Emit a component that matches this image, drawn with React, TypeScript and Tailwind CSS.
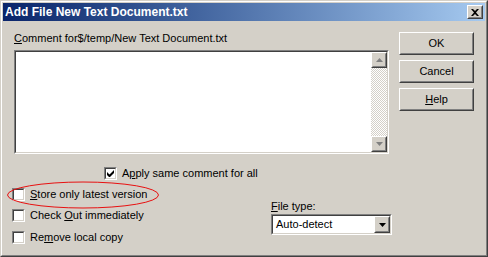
import React from 'react';

const raised =
  'border border-t-white border-l-white border-r-[#404040] border-b-[#404040]';
const raisedInner =
  'border border-t-[#D4D0C8] border-l-[#D4D0C8] border-r-[#808080] border-b-[#808080]';
const sunken =
  'border border-t-[#808080] border-l-[#808080] border-r-white border-b-white';
const sunkenInner =
  'border border-t-[#404040] border-l-[#404040] border-r-[#D4D0C8] border-b-[#D4D0C8]';

function Button({ children }: { children: React.ReactNode }) {
  return (
    <div className={`w-[75px] h-[23px] ${raised}`}>
      <div className={`w-full h-full flex items-center justify-center ${raisedInner}`}>
        {children}
      </div>
    </div>
  );
}

function Checkbox({ checked }: { checked?: boolean }) {
  return (
    <div className={`w-[13px] h-[13px] shrink-0 ${sunken}`}>
      <div className={`w-full h-full bg-white flex items-center justify-center ${sunkenInner}`}>
        {checked && (
          <svg width="7" height="7" viewBox="0 0 7 7">
            <path d="M0 2v3l2 2h1l4-4V0L2.5 4.5z" fill="#000" />
          </svg>
        )}
      </div>
    </div>
  );
}

function ArrowBtn({ down }: { down?: boolean }) {
  return (
    <div className={`w-[16px] h-[16px] ${raised}`}>
      <div className={`w-full h-full bg-[#D4D0C8] flex items-center justify-center ${raisedInner}`}>
        <svg width="9" height="5" viewBox="0 0 9 5">
          {down ? (
            <path d="M1 0h7L4.5 4z" fill="#808080" />
          ) : (
            <path d="M4.5 0L8 4H1z" fill="#808080" />
          )}
        </svg>
      </div>
    </div>
  );
}

export default function App() {
  return (
    <div
      className="w-[488px] h-[257px] bg-[#D4D0C8] text-black text-[11px] leading-[13px] border border-t-[#D4D0C8] border-l-[#D4D0C8] border-r-[#404040] border-b-[#404040]"
      style={{ fontFamily: '"Liberation Sans", Arial, sans-serif' }}
    >
      <div className="w-full h-full p-px border border-t-white border-l-white border-r-[#808080] border-b-[#808080] flex flex-col">
        {/* title bar */}
        <div className="h-[18px] shrink-0 bg-gradient-to-r from-[#0A246A] to-[#A6CAF0] flex items-center pl-[2px] pr-[2px]">
          <span className="text-white font-bold text-[12px] flex-1">Add File New Text Document.txt</span>
          <div className={`w-[16px] h-[14px] ${raised}`}>
            <div className={`w-full h-full bg-[#D4D0C8] flex items-center justify-center ${raisedInner}`}>
              <svg width="8" height="7" viewBox="0 0 8 7">
                <path d="M0 0h2l2 2 2-2h2L5 3.5 8 7H6L4 5 2 7H0l3-3.5z" fill="#000" />
              </svg>
            </div>
          </div>
        </div>

        <div className="relative flex flex-1">
          {/* left column */}
          <div className="pl-[11px] flex flex-col">
            <div className="mt-[11px] h-[13px]">
              <span className="underline">C</span>omment for$/temp/New Text Document.txt
            </div>
            <div className={`mt-[5px] w-[375px] h-[104px] ${sunken}`}>
              <div className={`w-full h-full bg-white flex justify-end ${sunkenInner}`}>
                <div className="w-[16px] h-full flex flex-col bg-[repeating-conic-gradient(#D4D0C8_0%_25%,#fff_0%_50%)] bg-[length:2px_2px]">
                  <ArrowBtn />
                  <div className="flex-1" />
                  <ArrowBtn down />
                </div>
              </div>
            </div>
            <div className="mt-[13px] ml-[90px] flex items-center gap-[5px] h-[13px]">
              <Checkbox checked />
              <span>
                A<span className="underline">p</span>ply same comment for all
              </span>
            </div>
            <div className="flex">
              <div className="-ml-[2px] flex flex-col">
                <div className="mt-[8px] flex items-center gap-[5px] h-[13px]">
                  <Checkbox />
                  <span>
                    <span className="underline">S</span>tore only latest version
                  </span>
                </div>
                <div className="mt-[8px] flex items-center gap-[5px] h-[13px]">
                  <Checkbox />
                  <span>
                    Check <span className="underline">O</span>ut immediately
                  </span>
                </div>
                <div className="mt-[9px] flex items-center gap-[5px] h-[13px]">
                  <Checkbox />
                  <span>
                    Re<span className="underline">m</span>ove local copy
                  </span>
                </div>
              </div>
              <div className="ml-auto mr-[-3px] flex flex-col">
                <div className="mt-[20px] h-[13px]">
                  <span className="underline">F</span>ile type:
                </div>
                <div className={`mt-px w-[121px] h-[21px] ${sunken}`}>
                  <div className={`w-full h-full bg-white flex items-center ${sunkenInner}`}>
                    <span className="flex-1 pl-[3px] text-[11px]">Auto-detect</span>
                    <div className={`w-[16px] h-[17px] ${raised}`}>
                      <div className={`w-full h-full bg-[#D4D0C8] flex items-center justify-center ${raisedInner}`}>
                        <svg width="7" height="4" viewBox="0 0 7 4">
                          <path d="M0 0h7L3.5 4z" fill="#000" />
                        </svg>
                      </div>
                    </div>
                  </div>
                </div>
              </div>
            </div>
          </div>

          {/* right column buttons */}
          <div className="ml-[10px] mt-[11px] flex flex-col gap-[5px]">
            <Button>OK</Button>
            <Button>Cancel</Button>
            <Button>
              <span>
                <span className="underline">H</span>elp
              </span>
            </Button>
          </div>

          {/* red annotation ellipse */}
          <svg
            className="absolute left-[3px] top-[160px] pointer-events-none"
            width="154"
            height="30"
            viewBox="0 0 154 30"
          >
            <ellipse cx="77" cy="14" rx="75.5" ry="13" fill="none" stroke="#E81010" strokeWidth="1" />
          </svg>
        </div>
      </div>
    </div>
  );
}
